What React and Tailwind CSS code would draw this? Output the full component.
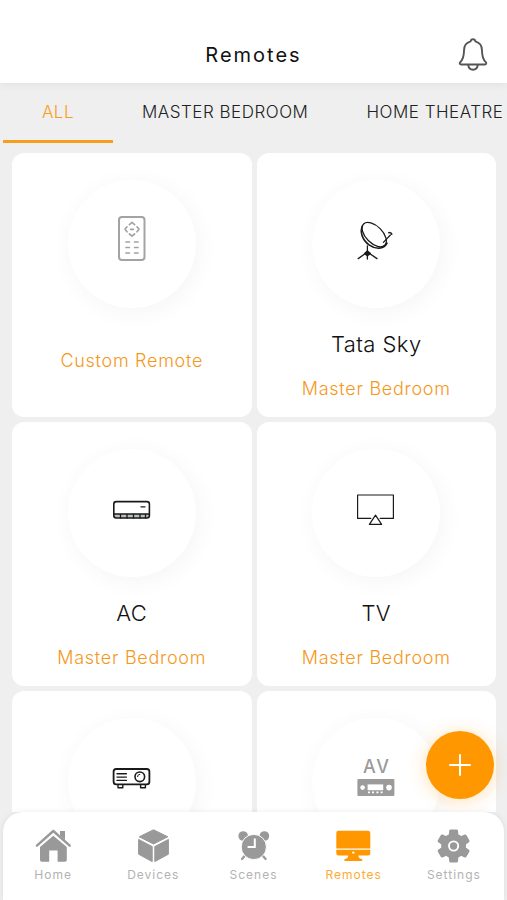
import React from "react";

const line = { fill: "none", strokeLinecap: "round", strokeLinejoin: "round" };

function RemoteIcon() {
  return (
    <g {...line} stroke="#a3a3a3" strokeWidth="2">
      <rect x="13" y="2" width="25.5" height="43" rx="3" />
      <g strokeWidth="1.7">
        <path d="M23.4 9.6 26 7.4l2.6 2.2M23.4 19 26 21.2l2.6-2.2M21 11.8l-2 2.5 2 2.5M31 11.8l2 2.5-2 2.5M24.6 14.3h2.8" />
        <path d="M20 27h3.4M28.6 27H32M20 32.5h3.4M28.6 32.5H32M20 38h3.4M28.6 38H32" />
      </g>
    </g>
  );
}

function DishIcon() {
  return (
    <g {...line} stroke="#1a1a1a" strokeWidth="1.3">
      <ellipse cx="24.2" cy="19.6" rx="15" ry="8.4" transform="rotate(45 24.2 19.6)" />
      <path d="M12.4 11.2C9.6 17 12.4 25 19 29.8c6 4.4 14.6 5.2 18-1.6" strokeWidth="1.6" />
      <path d="M33.4 27.4l7-7.4" strokeWidth="1.2" />
      <path d="M38.6 17.8c1.400-.6 3 0 3.200 1.600" strokeWidth="1.4" />
      <path d="M17.4 31v13M17.4 37 8.2 43.6M17.4 37l9.6 6.600" />
      <path d="M14.6 38.6 17.4 36l3 2.600-3 2z" fill="#1a1a1a" />
    </g>
  );
}

function AcIcon() {
  return (
    <g {...line} stroke="#1a1a1a" strokeWidth="1.6">
      <rect x="8" y="30" width="35" height="4" fill="#b9c0b9" stroke="none" />
      <rect x="7.8" y="17.6" width="35.6" height="16.4" rx="2.5" />
      <path d="M8 30h35M14.5 30v4M21 30v4M27.5 30v4M34 30v4M39.5 30v4M35 22.8h4" strokeWidth="1.3" />
    </g>
  );
}

function TvIcon() {
  return (
    <g {...line} stroke="#1a1a1a" strokeWidth="1.2">
      <path d="M20.8 34.4H7.6V11h35.8v23.4H30.2" />
      <path d="M25.5 31.2 31.6 40.4H19.4z" />
    </g>
  );
}

function ProjectorIcon() {
  return (
    <g {...line} stroke="#1a1a1a" strokeWidth="1.8">
      <rect x="7.6" y="16" width="35.8" height="15.4" rx="2.6" />
      <circle cx="33.8" cy="23.8" r="4.8" strokeWidth="1.6" />
      <path d="M31.6 23.6c0-1.4.8-2.2 2.2-2.2" strokeWidth="1" />
      <path d="M11 20.8h9.4M11 24.1h9.4M11 27.4h9.4" strokeWidth="1.4" />
      <path d="M12 32v2.8h4.8V32M34.6 32v2.8h4.8V32" strokeWidth="1.4" />
    </g>
  );
}

function AvIcon() {
  return (
    <g fill="#9b9b9b">
      <text x="27" y="20" textAnchor="middle" fontSize="18" fontWeight="500" letterSpacing="2" className="font-['Inter',sans-serif]">
        AV
      </text>
      <rect x="7.4" y="26" width="37" height="17" rx="1" />
      <g fill="#fff">
        <circle cx="12.6" cy="34.6" r="2.3" />
        <circle cx="39" cy="34.6" r="2.8" />
        <rect x="17.6" y="31.4" width="15.6" height="5.8" />
        <path d="M18 38.6h2v1.6h-2zM22 38.6h2v1.6h-2zM26.4 38.6h2v1.6h-2zM30.6 38.6h2v1.6h-2z" />
      </g>
    </g>
  );
}

function HomeIcon() {
  return (
    <g fill="currentColor">
      <path d="M18.3 7.8 31.8 19v13a1.8 1.8 0 0 1-1.8 1.8h-7.4V22.4h-8.4v11.4H6.8A1.8 1.8 0 0 1 5 32V19z" />
      <path d="M25 3h5v9l-5-4.2z" />
      <path d="M1.9 17.8 18.3 3.2 34.7 17.8" fill="none" stroke="#fff" strokeWidth="4.6" />
      <path d="M1.9 17.6 18.3 3 34.7 17.6" fill="none" stroke="currentColor" strokeWidth="2.4" strokeLinecap="round" strokeLinejoin="round" />
      <path d="M25 3h5v9l-5-4.4z" />
    </g>
  );
}

function CubeIcon() {
  return (
    <g fill="currentColor" stroke="currentColor" strokeWidth="1" strokeLinejoin="round">
      <path d="M18.5 1.8 32.8 8.8 18.5 16 4.2 8.8z" />
      <path d="M3.6 11.400 17.2 18.600v15L3.6 26.200z" />
      <path d="M33.4 11.400 19.800 18.600v15l13.600-7.400z" />
    </g>
  );
}

function AlarmIcon() {
  return (
    <g fill="currentColor">
      <circle cx="8.2" cy="8" r="4.8" />
      <circle cx="29.4" cy="8" r="4.8" />
      <path d="M10 27.500 7 31M27.600 27.500l3 3.500" stroke="currentColor" strokeWidth="2.2" strokeLinecap="round" />
      <circle cx="18.8" cy="19" r="12.600" stroke="#fff" strokeWidth="1" />
      <path d="M19.8 10.4v8.600h-7.200" fill="none" stroke="#fff" strokeWidth="2" />
    </g>
  );
}

function MonitorIcon() {
  return (
    <g fill="currentColor">
      <path d="M4 2.7h29a2.3 2.3 0 0 1 2.3 2.3v15.400H1.300V5A2.300 2.300 0 0 1 3.600 2.700z" />
      <path d="M1.3 21.8h34v3.4a2.3 2.3 0 0 1-2.3 2.3h-9.6c0 2 .8 3 3 3.4a1 1 0 0 1 0 2H10.200a1 1 0 0 1 0-2c2.200-.4 3-1.400 3-3.400H3.600a2.300 2.300 0 0 1-2.300-2.300z" />
      <circle cx="18.3" cy="24.6" r="1.2" fill="#fff" />
    </g>
  );
}

function GearIcon() {
  const tooth = "M13.6 9 14.2 2.8a1.500 1.500 0 0 1 1.500-1.300h5.800a1.500 1.500 0 0 1 1.500 1.300L23.600 9z";
  return (
    <g fill="currentColor">
      {[0, 60, 120, 180, 240, 300].map((a) => (
        <path key={a} d={tooth} transform={`rotate(${a} 18.6 18)`} />
      ))}
      <circle cx="18.6" cy="18" r="12.4" />
      <circle cx="18.6" cy="18" r="4.6" fill="none" stroke="#fff" strokeWidth="1.9" />
    </g>
  );
}

const tabs = ["ALL", "MASTER BEDROOM", "HOME THEATRE"];

const remotes = [
  { id: "custom", room: "Custom Remote", Icon: RemoteIcon },
  { id: "tata-sky", name: "Tata Sky", room: "Master Bedroom", Icon: DishIcon },
  { id: "ac", name: "AC", room: "Master Bedroom", Icon: AcIcon },
  { id: "tv", name: "TV", room: "Master Bedroom", Icon: TvIcon },
  { id: "projector", label: "Projector", Icon: ProjectorIcon },
  { id: "av", label: "AV", Icon: AvIcon },
];

const navItems = [
  { label: "Home", Icon: HomeIcon },
  { label: "Devices", Icon: CubeIcon },
  { label: "Scenes", Icon: AlarmIcon },
  { label: "Remotes", Icon: MonitorIcon, active: true },
  { label: "Settings", Icon: GearIcon },
];

function RemoteCard({ name, room, label, Icon }) {
  return (
    <button
      type="button"
      aria-label={label}
      className="flex h-[264px] flex-col items-center overflow-hidden rounded-xl bg-white pt-[27px]"
    >
      <span className="flex size-32 shrink-0 items-center justify-center rounded-full bg-white pb-[6px] shadow-[3px_4px_24px_rgba(0,0,0,0.045)]">
        <svg viewBox="0 0 52 52" className="size-[52px]" aria-hidden="true">
          <Icon />
        </svg>
      </span>
      {name && <span className="mt-5 text-[22px] leading-8 font-light tracking-[0.02em] text-[#111]">{name}</span>}
      {room && (
        <span className={`${name ? "mt-4" : "mt-10"} text-lg leading-[26px] font-light tracking-[0.04em] text-[#f5981a]`}>
          {room}
        </span>
      )}
    </button>
  );
}

export default function App() {
  return (
    <div className="relative flex h-screen flex-col overflow-hidden bg-[#efefef] font-['Inter',sans-serif]">
      <header className="z-10 grid h-[83px] shrink-0 grid-cols-[1fr_auto_1fr] items-center bg-white pt-[26px] shadow-[0_2px_8px_rgba(0,0,0,0.06)]">
        <h1 className="col-start-2 text-xl font-normal tracking-[2px] text-[#111]">Remotes</h1>
        <button type="button" aria-label="Notifications" className="mr-[18px] justify-self-end">
          <svg viewBox="0 0 32 36" className="block h-9 w-8" fill="none" stroke="#555" strokeWidth="1.9" strokeLinejoin="round" aria-hidden="true">
            <path d="M16 2.200c-1.300 0-2.200.9-2.400 2.200C9.300 5.600 7 9 7 13.500c0 6-1 9-3.800 11.700-.9.900-.5 2.300.9 2.300h23.800c1.400 0 1.800-1.400.9-2.300C26 22.500 25 19.500 25 13.500c0-4.500-2.300-7.900-6.600-9.100-.2-1.300-1.100-2.200-2.400-2.200z" />
            <path d="M11.200 27.800c.4 3 2.200 4.900 4.800 4.900s4.400-1.900 4.800-4.900" />
          </svg>
        </button>
      </header>

      <div role="tablist" className="flex h-[60px] shrink-0 overflow-hidden pl-[3px]">
        {tabs.map((tab, i) => (
          <button
            key={tab}
            type="button"
            role="tab"
            aria-selected={i === 0}
            className={`min-w-[110px] shrink-0 border-b-[3px] px-[29px] pt-[3px] text-[17px] font-light tracking-[0.03em] whitespace-nowrap ${
              i === 0 ? "border-[#f99d1c] text-[#f99d1c]" : "border-transparent text-[#222]"
            }`}
          >
            {tab}
          </button>
        ))}
      </div>

      <main className="min-h-0 flex-1 overflow-hidden pt-[10px] pr-[11px] pl-3">
        <div className="grid grid-cols-2 gap-[5px]">
          {remotes.map(({ id, ...remote }) => (
            <RemoteCard key={id} {...remote} />
          ))}
        </div>
      </main>

      <button
        type="button"
        aria-label="Add remote"
        className="absolute right-[13px] bottom-[101px] flex size-[68px] items-center justify-center rounded-full bg-[#ff9800] shadow-[0_2px_18px_rgba(255,152,0,0.3)]"
      >
        <svg viewBox="0 0 24 24" className="size-6" stroke="#fff" strokeWidth="2" strokeLinecap="round" aria-hidden="true">
          <path d="M12 2v20M2 12h20" />
        </svg>
      </button>

      <nav className="z-10 mx-[3px] grid h-[88px] shrink-0 grid-cols-5 rounded-t-[20px] bg-white pt-4 shadow-[0_0_6px_rgba(0,0,0,0.08)]">
        {navItems.map(({ label, Icon, active }) => (
          <a
            key={label}
            href={`#${label.toLowerCase()}`}
            aria-current={active ? "page" : undefined}
            className={`flex flex-col items-center ${active ? "text-[#ff9800]" : "text-[#999]"}`}
          >
            <svg viewBox="0 0 37 36" className="h-9 w-[37px]" aria-hidden="true">
              <Icon />
            </svg>
            <span className={`mt-[3px] text-xs leading-4 tracking-[1px] ${active ? "text-[#ffab33]" : "text-[#b3b3b3]"}`}>{label}</span>
          </a>
        ))}
      </nav>
    </div>
  );
}
